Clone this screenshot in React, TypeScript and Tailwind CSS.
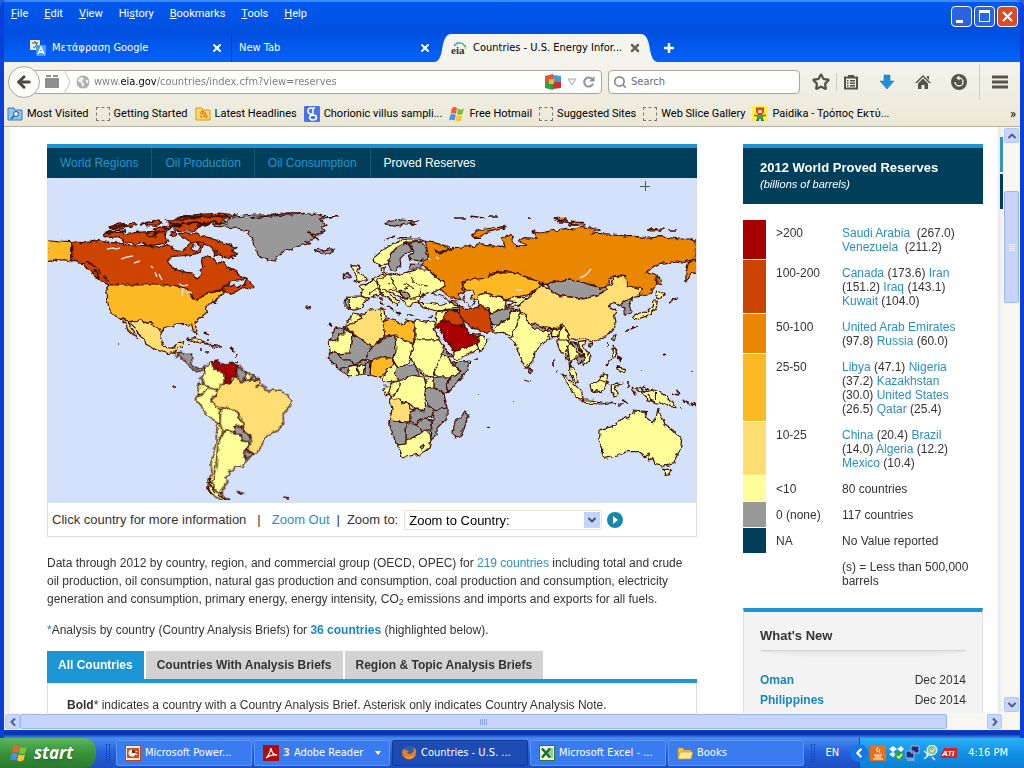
import type { ReactNode } from "react";
import {
  ArrowLeft,
  ChevronDown,
  ChevronLeft,
  ChevronRight,
  ChevronUp,
  Search,
  Star,
  X,
} from "lucide-react";

const RED = "#a80000";
const RUST = "#cd4400";
const ORANGE = "#ea8600";
const AMBER = "#fdb924";
const SAND = "#ffdf73";
const LEMON = "#ffff99";
const GRAY = "#999999";

type Shape = [fill: string, points: string];

// Each sheet of the map has its own origin and scale
const SHEETS: { transform: string; width: number; shapes: Shape[] }[] = [
  {
    // North America, Greenland
    transform: "translate(40 135) scale(0.3333)",
    width: 3.6,
    shapes: [
      [AMBER, "20,314 60,318 95,320 95,378 70,374 50,378 40,374 20,382"],
      [
        RUST,
        "95,320 125,323 140,318 160,320 175,314 215,322 245,325 270,333 320,331 350,338 375,332 385,328 400,345 425,350 440,335 455,320 462,330 455,345 470,350 480,335 470,322 490,325 484,352 460,358 430,362 395,364 385,378 398,400 430,410 458,415 466,428 476,432 482,412 492,396 486,372 500,362 520,370 532,385 545,380 565,400 590,410 605,425 622,430 600,437 570,440 552,458 580,448 590,455 612,448 622,432 642,452 640,462 615,456 590,472 570,478 548,462 500,475 490,487 460,492 455,480 430,462 385,450 210,450 195,445 182,432 165,425 155,405 140,400 130,386 120,385 108,376 95,378",
      ],
      [
        AMBER,
        "210,450 385,450 410,452 440,460 455,480 460,492 490,487 500,475 530,470 548,461 555,472 540,482 532,492 515,500 508,510 497,512 502,530 480,550 465,562 474,585 470,598 460,588 455,568 440,572 430,565 405,567 398,574 385,573 368,582 364,592 350,575 340,572 330,560 312,562 300,555 270,560 245,552 220,540 208,522 200,490 198,465",
      ],
      [
        SAND,
        "245,552 270,560 300,555 312,564 330,560 342,574 352,576 364,592 362,610 372,636 392,640 405,635 412,620 432,618 425,638 410,642 404,652 385,656 350,645 318,628 312,612 295,596 285,578 268,562 270,575 288,600 290,608 272,592 262,582 258,566 245,555",
      ],
      [
        RUST,
        "190,300 200,290 245,292 262,298 290,292 330,290 350,305 345,292 378,290 375,310 390,318 375,325 330,332 300,322 290,328 250,322 240,305 200,308",
      ],
      [RUST, "415,296 445,294 470,298 510,308 530,318 560,326 588,338 575,346 592,358 570,364 578,372 556,368 540,360 525,362 530,348 505,332 480,322 450,320 430,310"],
      [RUST, "375,255 395,258 420,243 480,238 540,234 592,240 550,252 556,260 520,262 500,272 470,278 462,288 430,288 400,285 405,275 380,270 395,264"],
      [RUST, "206,276 240,266 262,274 240,284 210,284"],
      [RUST, "262,270 285,262 292,268 275,276"],
      [RUST, "315,264 345,256 366,262 350,274 320,272"],
      [RUST, "340,282 370,274 395,278 380,288 350,290"],
      [RUST, "320,296 345,290 340,306 325,304"],
      [RUST, "392,296 405,290 410,300 398,306"],
      [
        GRAY,
        "518,268 560,264 562,256 585,246 640,240 700,240 720,235 780,232 810,238 830,238 850,244 895,245 866,250 838,252 858,268 842,276 858,286 842,296 810,300 836,308 795,320 812,326 790,330 760,340 730,350 718,358 705,378 685,375 662,370 654,356 650,345 636,325 638,310 622,290 600,284 590,280 560,276 530,274",
      ],
      [GRAY, "822,345 832,340 845,346 868,340 884,345 872,354 848,356 830,350"],
      [SAND, "442,612 460,608 485,616 506,628 480,624 460,618"],
      [GRAY, "510,628 535,630 545,636 520,638"],
    ],
  },
  {
    // Central and South America
    transform: "translate(130 340) scale(0.3333)",
    width: 3.6,
    shapes: [
      [GRAY, "138,40 152,36 185,42 185,66 192,82 215,86 232,80 230,92 212,94 190,90 168,66 150,52"],
      [LEMON, "132,34 150,38 138,50"],
      [LEMON, "225,78 248,64 252,88 284,100 286,125 270,145 252,150 236,142 220,130 208,116 224,102"],
      [RED, "250,65 262,60 268,72 310,70 326,76 318,98 320,106 300,114 300,128 286,132 284,102 258,88"],
      [GRAY, "324,80 346,96 342,124 328,124 318,105"],
      [LEMON, "346,100 366,103 362,122 344,122"],
      [GRAY, "366,103 380,112 376,122 362,122"],
      [LEMON, "204,130 220,130 238,144 216,164 202,162 206,146"],
      [LEMON, "200,166 216,164 238,144 268,150 262,162 245,168 243,182 256,198 272,200 270,246 262,250 226,222 212,195 196,176"],
      [
        SAND,
        "268,134 286,132 300,128 320,108 330,125 345,125 375,122 385,112 390,128 378,142 400,136 406,148 430,150 455,155 476,166 486,182 480,200 460,220 460,246 440,275 412,284 398,300 396,318 380,338 370,340 348,325 365,305 362,290 355,282 342,270 336,242 320,215 290,200 272,206 255,198 243,180 262,164",
      ],
      [LEMON, "272,204 290,200 320,215 326,232 336,240 340,258 315,262 312,275 288,272 278,276 270,250"],
      [GRAY, "315,262 334,258 344,280 362,286 355,307 335,300 335,288 312,275"],
      [GRAY, "346,328 370,342 360,355 342,352"],
      [LEMON, "278,277 290,272 312,277 335,290 336,302 357,307 346,328 342,350 350,360 340,378 314,380 310,392 296,394 302,404 285,412 292,430 276,446 278,460 250,455 248,420 256,380 264,310"],
      [LEMON, "262,250 270,250 278,277 264,310 258,380 248,420 248,445 268,460 300,478 280,480 252,470 236,448 234,425 246,400 243,370 258,310"],
      [GRAY, "322,458 342,458 332,463"],
      [GRAY, "464,474 478,475 472,479"],
    ],
  },
  {
    // Europe and Asia
    transform: "translate(370 135) scale(0.3333)",
    width: 3.6,
    shapes: [
      [
        ORANGE,
        "165,318 200,325 235,335 232,345 205,352 195,342 200,355 225,350 248,338 300,335 330,325 360,332 405,335 396,310 420,298 430,302 425,320 440,335 470,330 445,318 462,308 500,310 486,290 510,294 540,288 590,280 615,282 640,275 690,285 660,294 740,298 770,305 800,304 830,310 870,305 930,312 960,312 978,320 978,370 940,382 920,378 900,382 870,385 850,395 830,410 858,420 860,450 835,480 805,485 815,462 775,455 765,430 740,422 720,430 715,455 690,460 650,445 600,432 530,445 515,445 480,430 430,412 400,410 360,415 355,430 318,432 280,440 274,452 285,470 265,476 275,495 240,488 215,465 225,440 200,430 188,415 175,405 155,385 165,375 175,360",
      ],
      [ORANGE, "980,370 955,385 948,410 948,438 965,420 980,410"],
      [ORANGE, "862,420 872,432 876,450 864,446"],
      [ORANGE, "305,300 320,288 345,282 408,274 400,280 350,292 330,310 310,310"],
      [ORANGE, "545,250 585,250 590,256 565,260"],
      [ORANGE, "590,262 640,262 648,270 615,270"],
      [ORANGE, "835,282 880,282 870,288 840,288"],
      [
        AMBER,
        "280,440 318,432 355,430 360,418 400,410 430,412 480,430 518,447 490,468 480,478 450,485 410,495 395,488 375,485 350,474 330,478 326,495 310,490 298,472 275,460",
      ],
      [GRAY, "530,445 560,440 600,432 650,445 690,460 716,455 712,466 690,475 670,486 640,490 570,482 540,465"],
      [
        SAND,
        "515,448 540,465 570,482 640,492 670,486 712,466 706,452 724,448 728,430 745,422 765,425 775,452 815,462 805,485 790,488 765,500 745,512 735,502 716,512 728,524 740,522 732,538 738,560 730,580 710,605 680,615 665,622 640,612 620,615 600,610 590,585 560,580 520,575 475,565 450,540 440,512 475,490 490,472",
      ],
      [GRAY, "750,510 765,498 788,490 778,512 786,530 766,540 764,520"],
      [LEMON, "790,545 812,534 832,530 850,515 852,495 862,496 858,522 834,542 795,555"],
      [LEMON, "860,468 885,478 872,490 858,485"],
      [LEMON, "732,600 738,598 734,614 728,612"],
      [
        LEMON,
        "412,606 430,592 440,570 445,540 465,535 475,562 490,575 530,590 560,582 575,572 562,605 545,605 545,592 535,600 540,612 526,620 492,652 488,682 468,700 452,672 440,640 434,618",
      ],
      [GRAY, "476,566 500,568 528,582 526,588 490,580"],
      [GRAY, "535,580 552,580 550,588 535,588"],
      [LEMON, "565,590 580,570 592,590 600,612 590,625 596,650 578,650 562,625"],
      [
        RUST,
        "262,508 280,520 308,520 330,514 358,528 360,562 370,590 345,592 325,580 300,576 284,560 268,540",
      ],
      [RUST, "216,550 232,528 260,526 272,545 280,568 260,572 236,560"],
      [RED, "200,572 214,556 236,560 262,575 282,570 300,598 326,606 320,625 280,640 250,650 240,630 222,610 214,590"],
      [LEMON, "248,652 280,640 320,628 328,640 300,655 262,676 250,668"],
      [LEMON, "330,600 354,614 345,635 330,652 322,628 328,608"],
      [ORANGE, "302,600 328,596 326,608"],
      [LEMON, "148,502 180,492 210,494 240,502 260,505 262,520 230,524 200,528 178,522 155,518"],
      [LEMON, "200,530 234,526 214,556 198,574 196,548"],
      [GRAY, "240,496 262,498 268,512 255,512"],
      [GRAY, "360,535 380,528 400,518 432,520 418,532 415,552 385,568 362,565"],
      [LEMON, "365,595 372,586 385,568 415,552 420,532 436,526 455,535 445,548 440,572 425,604 400,592"],
      [LEMON, "326,480 350,474 375,485 395,488 408,500 405,518 368,534 355,520 330,510 322,495"],
      [LEMON, "405,496 430,488 475,488 440,510 405,516 440,500"],
      [LEMON, "12,368 40,345 70,325 110,312 150,312 162,318 110,322 78,340 62,360 55,382 30,392 14,380"],
      [GRAY, "55,384 62,360 78,340 112,322 125,345 100,358 90,372 92,390 75,408 62,402"],
      [GRAY, "118,326 155,318 166,345 172,370 150,378 122,374 115,362 132,350"],
      [GRAY, "118,384 152,386 155,402 120,402"],
      [LEMON, "34,400 46,398 44,415 34,412"],
      [
        LEMON,
        "0,440 18,426 60,416 80,420 110,412 140,405 175,405 188,418 200,430 226,440 215,462 195,468 180,480 165,478 150,482 155,500 128,504 118,518 105,505 96,492 72,476 60,470 62,482 88,500 80,512 58,492 36,476 0,482",
      ],
      [LEMON, "-32,450 -10,448 10,432 30,450 26,462 32,478 10,484 -5,490 -28,482 -22,465"],
      [LEMON, "-72,484 -28,483 -5,490 -20,505 -28,520 -50,526 -62,522 -62,492 -74,492"],
      [GRAY, "-74,492 -62,492 -62,520 -75,518"],
      [LEMON, "-54,392 -32,394 -40,408 -26,420 -10,430 -15,438 -50,440 -36,430 -48,412"],
      [GRAY, "-80,420 -66,412 -60,428 -80,432"],
      [GRAY, "45,262 70,258 90,255 150,258 120,262 135,268 100,266 90,275 60,272"],
      [GRAY, "90,466 112,470 120,485 108,492 92,480"],
    ],
  },
  {
    // Southeast Asia and Oceania
    transform: "translate(400 340) scale(0.3333)",
    width: 3.6,
    shapes: [
      [GRAY, "387,78 398,90 394,102 386,98"],
      [LEMON, "470,0 500,0 512,12 500,25 502,42 510,60 504,66 496,40 480,38"],
      [LEMON, "500,22 512,10 540,40 528,55 516,58 514,75 506,60"],
      [GRAY, "512,5 530,8 534,22 554,42 542,46 522,22"],
      [GRAY, "528,52 554,45 552,64 536,70"],
      [LEMON, "535,8 555,4 550,20 570,48 568,64 550,76 548,66 558,50 538,22"],
      [LEMON, "508,70 524,95 532,128 520,120 510,100"],
      [LEMON, "483,102 500,110 520,130 545,155 550,178 532,172 508,138"],
      [LEMON, "545,180 572,180 596,184 622,190 600,192 556,188"],
      [LEMON, "570,132 590,126 602,112 615,98 626,108 620,135 606,158 576,154"],
      [LEMON, "634,135 655,128 666,132 644,142 656,164 644,168 634,156"],
      [LEMON, "636,26 650,28 646,48 638,48"],
      [LEMON, "652,80 674,86 670,98 656,92"],
      [LEMON, "704,145 722,142 735,156 762,150 790,160 804,174 828,200 812,200 792,188 770,192 742,182 730,164"],
      [LEMON, "566,12 578,10 574,22"],
      [
        LEMON,
        "597,275 640,258 662,240 672,228 684,234 698,222 702,210 740,215 736,232 760,248 768,236 774,205 782,226 790,240 796,256 815,270 828,284 845,296 842,325 826,356 822,372 790,378 768,374 758,356 745,360 748,342 735,350 715,335 680,335 652,348 612,355 606,345 608,325 596,296",
      ],
      [LEMON, "790,388 812,388 808,404 798,406"],
    ],
  },
  {
    // Africa
    transform: "translate(0 0)",
    width: 1.2,
    shapes: [
      [LEMON, "342,328 348,322 352,314 360,315 361,319 345,327"],
      [GRAY, "329,340 335,328 345,328 345,334 338,334 338,341"],
      [LEMON, "329,340 338,341 338,334 345,334 345,329 352,334 350,353 338,354 330,351"],
      [SAND, "345,327 361,319 360,315 370,310 380,309 383,310 381,316 384,322 385,336 372,347 352,333"],
      [LEMON, "380,309 384,310 385,317 387,318 383,323 381,316"],
      [AMBER, "383,322 390,319 400,323 403,325 407,320 415,322 415,344 395,335 386,336"],
      [LEMON, "415,320 425,322 433,321 436,327 433,329 440,340 415,340"],
      [GRAY, "352,334 372,347 371,356 362,360 356,365 350,360 342,360 338,354 350,353"],
      [GRAY, "372,347 386,337 395,336 396,350 392,358 380,358 371,361 366,357"],
      [LEMON, "395,335 414,345 413,355 408,364 398,368 393,360 396,350"],
      [LEMON, "415,340 440,340 446,349 441,356 437,368 433,377 425,376 414,365 410,356 414,345"],
      [GRAY, "444,345 448,352 453,357 446,356 441,354"],
      [LEMON, "441,355 449,357 451,364 461,371 451,377 438,377 434,372 437,366"],
      [GRAY, "452,363 470,361 468,370 449,392 447,385 451,377 461,371"],
      [GRAY, "434,378 438,377 450,377 447,385 449,392 445,394 434,388"],
      [LEMON, "426,379 434,378 434,387 426,388"],
      [GRAY, "425,388 434,388 444,394 446,403 447,408 437,410 430,407 425,400"],
      [LEMON, "400,379 410,375 424,377 426,385 425,393 424,402 425,411 415,409 408,402 392,399 390,396 397,392 400,384"],
      [LEMON, "386,392 392,383 400,380 400,385 396,393 391,397"],
      [LEMON, "383,386 392,386 390,393 386,395"],
      [LEMON, "383,379 387,370 394,362 398,370 397,381 384,382"],
      [GRAY, "395,374 398,368 408,364 414,366 420,375 410,376 404,379 397,379"],
      [AMBER, "370,375 371,361 380,358 392,358 394,363 386,372 379,377"],
      [GRAY, "330,352 338,354 342,360 350,360 356,365 348,366 346,373 340,370 333,363 328,358"],
      [GRAY, "356,365 362,360 370,361 366,365 357,367"],
      [LEMON, "348,367 357,365 358,375 348,376"],
      [LEMON, "358,366 364,365 365,374 358,375"],
      [GRAY, "365,364 371,361 370,375 365,374"],
      [GRAY, "340,370 348,367 348,376"],
      [SAND, "390,399 400,399 402,403 408,402 410,409 416,410 410,412 410,422 389,422 392,410"],
      [GRAY, "410,412 417,409 424,411 425,405 433,408 434,415 423,420 416,424 410,421"],
      [GRAY, "434,410 447,408 447,418 437,428 437,435 431,440 432,425 434,415"],
      [GRAY, "416,424 424,418 432,420 431,430 422,432"],
      [GRAY, "406,424 416,424 422,432 414,438 406,442"],
      [GRAY, "389,421 410,422 406,424 406,444 398,445 393,436"],
      [LEMON, "398,445 406,444 406,440 414,438 422,432 430,432 431,441 429,448 420,454 405,457 402,456"],
      [GRAY, "420,447 423,445 424,448 421,449"],
      [GRAY, "465,411 468,417 464,428 460,437 455,438 453,433 455,421 462,417"],
    ],
  },
];

const BORDERS =
  "M369 294 377 288 378 280M377 288 386 291 394 289M392 276 393 283 398 291M394 289 400 292 410 285M410 285 414 290M400 292 404 299 416 299M412 277 414 283 428 286M410 299 419 296 420 288M378 280 386 276M655.500 392V403M410 285 404 284M388 284 393 283M524 380 530 382M610 384 600 380";

const SPECKS =
  "M118 343h1M188 345h2M200 350h3M206 352h4M230 348l4 3M236 354v3M237 361v2M204 332l5 4M207 341h3M347 272h2M345 300h2M328 324l4 3M336 328h2M305 307l6 1M174 387h3M456 364h2M475 359h3M478 395h1M486 428l5-1M513 401h1M554 360v6M557 371h1M572 377h1M583 400h1M608 342v6M612 345l4 8M616 352l5 10M618 356l4 3M606 366l5-8M632 388l4 6M628 382v6M640 392h6M622 400l6 3M618 404h6M606 402l10 2M643 386l6 4M648 394l5 8M672 394l8 1M676 390l5 4M683 400l8 5M692 403l4 3M664 355l2-1M642 370h1M690 372h2M681 409h1M634 392l2 3M454 218h12M470 216l14 2M488 217h10M528 218h3M560 222h12M568 225h10M647 229h10M668 230h8M380 303l5 2M388 306l6 4M396 312l4 3M408 315h5M429 317l4-1M382 297v4M626 332l3-3M630 329l8-4M668 302l9-4M98 269l4 5M90 263l6 5M86 260l4 4M94 270l6 9M104 276l5 6M312 236l8 4M306 232l10 2M250 218l20-2M270 216l30-2M176 220l28-3M170 226l24-4M212 300l4 3M385 240l10-4M397 238l14-1M209 483l6 10M207 486l5 9M218 495l10 4M210 478l1 5";

const LAKES =
  "M107 249l6-1 3 1 4-1M121 259l6-2 6-1M134 263l6-2M151 266l2 2M155 272l2 5M159 274l3 6M179 284l4 2 5-1M183 288l-1 8M186 291l6 2M428 258l3 2M436 257l3 2M580 278l6-3 5-6M516 290h6";

function WorldMap() {
  return (
    <svg
      viewBox="48 178 648 325"
      className="block h-auto w-full bg-[#d4e1fb]"
      role="img"
      aria-label="Proved Reserves"
    >
      <defs>
        <filter id="coast" x="0" y="0" width="100%" height="100%" colorInterpolationFilters="sRGB">
          <feTurbulence type="fractalNoise" baseFrequency="0.18" numOctaves="2" seed="4" />
          <feDisplacementMap in="SourceGraphic" scale="5" xChannelSelector="R" yChannelSelector="G" />
        </filter>
      </defs>
      <g filter="url(#coast)" stroke="#401008" strokeLinejoin="round">
        {SHEETS.map((sheet) => (
          <g key={sheet.transform} transform={sheet.transform} strokeWidth={sheet.width}>
            {sheet.shapes.map(([fill, points]) => (
              <polygon key={points} points={points} fill={fill} />
            ))}
          </g>
        ))}
        {/* Caspian and Black seas */}
        <path
          d="M466 290l5-1 3 4-3 5 3 5-3 4-5-4-3-6z M420 298l8-5 8 1 10 4 4 5-8 2-14-2-8 1z"
          fill="#d4e1fb"
          strokeWidth="1"
        />
        <path d={BORDERS} fill="none" strokeWidth="1" />
        <path d={SPECKS} fill="none" strokeWidth="1.6" />
        <path
          d="M178 217l50-1M172 224l50-2M164 229l18-4M196 226l14-3M110 228l18-3M106 233l20-2M140 225l14-3"
          fill="none"
          strokeWidth="2"
        />
      </g>
      <path d={LAKES} fill="none" stroke="#d5d9e4" strokeWidth="1.500" />
      <path d="M640 186.500h10M645.500 181v10" stroke="#555" strokeWidth="1" />
    </svg>
  );
}

const MENUS = ["File", "Edit", "View", "History", "Bookmarks", "Tools", "Help"];
const MENU_KEYS: Record<string, number> = { History: 2 };

const LEGEND: { color: string; range: string; lines: string[] }[] = [
  { color: "bg-[#a80000]", range: ">200", lines: ["[Saudi Arabia]\u00a0 (267.0)", "[Venezuela]\u00a0 (211.2)"] },
  { color: "bg-[#cd4400]", range: "100-200", lines: ["[Canada] (173.6) [Iran]", "(151.2) [Iraq] (143.1)", "[Kuwait] (104.0)"] },
  { color: "bg-[#ea8600]", range: "50-100", lines: ["[United Arab Emirates]", "(97.8) [Russia] (60.0)"] },
  { color: "bg-[#fdb924]", range: "25-50", lines: ["[Libya] (47.1) [Nigeria]", "(37.2) [Kazakhstan]", "(30.0) [United States]", "(26.5) [Qatar] (25.4)"] },
  { color: "bg-[#ffdf73]", range: "10-25", lines: ["[China] (20.4) [Brazil]", "(14.0) [Algeria] (12.2)", "[Mexico] (10.4)"] },
  { color: "bg-[#ffff99]", range: "<10", lines: ["80 countries"] },
  { color: "bg-[#999999]", range: "0 (none)", lines: ["117 countries"] },
  { color: "bg-[#003f5c]", range: "NA", lines: ["No Value reported"] },
  { color: "", range: "", lines: ["(s) = Less than 500,000", "barrels"] },
];

function LegendLine({ text }: { text: string }) {
  return (
    <div className="whitespace-nowrap">
      {text.split(/(\[[^\]]+\])/).map((part, i) =>
        part.startsWith("[") ? (
          <a key={i} href="#country" className="text-[#2a8fbd]">
            {part.slice(1, -1)}
          </a>
        ) : (
          part
        )
      )}
    </div>
  );
}

function WindowsFlag({ className }: { className: string }) {
  return (
    <svg viewBox="0 0 16 16" className={className}>
      <path d="M3 2q3-2 5 0L7 8Q4 6 1.500 8z" fill="#f0602c" />
      <path d="M9 2.500q3 2 6 0L13.500 8q-3 2-5.500 0z" fill="#7cc03f" />
      <path d="M1.300 9Q4 7 6.800 9L5.500 14.500Q3 13 0 14.500z" fill="#4d8ff0" />
      <path d="M7.800 9q3 2 5.600 0L12 14.500q-3 2-5.600 0z" fill="#fbc72f" />
    </svg>
  );
}

function Placeholder() {
  return <span className="size-3.5 border border-dashed border-[#777]" />;
}

const BOOKMARKS: { label: string; icon: ReactNode }[] = [
  {
    label: "Most Visited",
    icon: (
      <svg viewBox="0 0 16 16" className="size-4">
        <path d="M1 2h6l1 2h7v10H1z" fill="#8cc4ee" stroke="#3f7fb8" />
        <circle cx="9" cy="8" r="2.500" fill="#dff0fc" stroke="#23588c" />
        <path d="M7 10l-3 3" stroke="#23588c" strokeWidth="1.500" />
      </svg>
    ),
  },
  { label: "Getting Started", icon: <Placeholder /> },
  {
    label: "Latest Headlines",
    icon: (
      <svg viewBox="0 0 16 16" className="size-4">
        <path d="M1 2h6l1 2h7v10H1z" fill="#fbd66b" stroke="#d19a26" />
        <path d="M5 7a5 5 0 0 1 5 5M5 10a2 2 0 0 1 2 2M6 5a7 7 0 0 1 6 7" fill="none" stroke="#e07c10" strokeWidth="1.300" />
      </svg>
    ),
  },
  {
    label: "Chorionic villus sampli...",
    icon: (
      <svg viewBox="0 0 16 16" className="size-4">
        <rect width="16" height="16" rx="1" fill="#4775e8" />
        <path d="M11 2H7a3 3 0 0 0 0 6h2v2M9 9a3 2.200 0 1 0 0 5 3 2.200 0 0 0 0-5M9 3v4" fill="none" stroke="#fff" strokeWidth="1.600" />
      </svg>
    ),
  },
  { label: "Free Hotmail", icon: <WindowsFlag className="size-4" /> },
  { label: "Suggested Sites", icon: <Placeholder /> },
  { label: "Web Slice Gallery", icon: <Placeholder /> },
  {
    label: "Paidika - Τρόπος Εκτύ...",
    icon: (
      <svg viewBox="0 0 16 16" className="size-4">
        <rect width="16" height="16" fill="#fff04a" />
        <path d="M4 1l2 1 2-1 2 1 2-1v5l-2 3H6L4 6z" fill="#d8441c" />
        <path d="M6 4h4v3H6z" fill="#ffd9b8" />
        <path d="M5 9h6v4H5z" fill="#2fa84a" />
        <path d="M5 13h2v2H4zM9 13h2l1 2H9z" fill="#2a55c8" />
        <path d="M2 9l3 1M14 9l-3 1" stroke="#d8441c" strokeWidth="1.500" />
      </svg>
    ),
  },
];

const TASKS: { label: string; active?: boolean; count?: string; icon: ReactNode }[] = [
  {
    label: "Microsoft Power...",
    icon: (
      <svg viewBox="0 0 16 16" className="size-4 shrink-0">
        <rect x="0.500" y="0.500" width="15" height="15" fill="#fbe9dc" stroke="#c4451c" />
        <rect x="2" y="3" width="12" height="10" fill="#c9501f" />
        <circle cx="7" cy="8" r="3.500" fill="#fff" />
        <path d="M7 8V4.500A3.500 3.500 0 0 1 10.500 8z" fill="#6b2a10" />
        <path d="M11.500 6v1M11.500 9v1" stroke="#fff" strokeWidth="1.500" />
      </svg>
    ),
  },
  {
    label: "Adobe Reader",
    count: "3",
    icon: (
      <svg viewBox="0 0 16 16" className="size-4 shrink-0">
        <rect width="16" height="16" fill="#b30b0b" />
        <path d="M3 13q4-4 5-10 1 7 6 7-6-1-11 3z" fill="none" stroke="#fff" strokeWidth="1.300" />
      </svg>
    ),
  },
  {
    label: "Countries - U.S. ...",
    active: true,
    icon: (
      <svg viewBox="0 0 16 16" className="size-4 shrink-0">
        <circle cx="8" cy="8" r="7" fill="#2b5fb4" />
        <path d="M2 4q-2 5 1 8 4 4 9 1 4-3 3-8-1-2-3-3 2 4-1 6-3 2-5 0l2-2-3-1q-2 0-3-1z" fill="#ee7a1a" />
        <path d="M4 11q4 4 9 0" fill="none" stroke="#fbc531" />
      </svg>
    ),
  },
  {
    label: "Microsoft Excel - ...",
    icon: (
      <svg viewBox="0 0 16 16" className="size-4 shrink-0">
        <rect x="0.500" y="0.500" width="15" height="15" fill="#e9f5e6" stroke="#2f7a35" />
        <rect x="9" y="3" width="5" height="10" fill="#9ccb98" />
        <path d="M3 3.500l8 9M11 3.500l-8 9" stroke="#1d6b2a" strokeWidth="2.500" />
      </svg>
    ),
  },
  {
    label: "Books",
    icon: (
      <svg viewBox="0 0 16 16" className="size-4 shrink-0">
        <path d="M1 3h5l1 2h7v9H1z" fill="#f4c64a" stroke="#b98a1c" strokeWidth="0.700" />
        <path d="M1 14l2-7h13l-2 7z" fill="#ffe88f" stroke="#b98a1c" strokeWidth="0.700" />
      </svg>
    ),
  },
];

function BrowserTabs() {
  return (
    <div className="flex h-7 items-stretch text-[11px] text-white">
      <div className="flex w-[228px] items-center border-r border-[#0038b0] pr-2 pl-[26px]">
        <svg viewBox="0 0 16 16" className="mr-1.5 size-4">
          <rect width="10" height="10" fill="#e8e8e8" />
          <path d="M2 3h6M5 1v2M3 8q4-1 4-5" stroke="#555" fill="none" />
          <rect x="6" y="5" width="10" height="11" rx="1" fill="#4a9ff5" />
          <path d="M8 14l3-7 3 7M9 12h4" stroke="#fff" strokeWidth="1.300" fill="none" />
        </svg>
        <span className="flex-1">Μετάφραση Google</span>
        <button aria-label="Close tab">
          <X className="size-3" strokeWidth={4} />
        </button>
      </div>
      <div className="flex w-[203px] items-center pr-1 pl-[7px]">
        <span className="flex-1">New Tab</span>
        <button aria-label="Close tab">
          <X className="size-3" strokeWidth={4} />
        </button>
      </div>
      <svg viewBox="0 0 16 28" className="h-7 w-4">
        <path d="M0 28Q5 27 7 16 9 0 16 0V28z" fill="#f4f3ec" />
      </svg>
      <div className="flex w-[190px] items-center gap-1.5 bg-[#f4f3ec] text-black">
        <svg viewBox="0 0 16 16" className="size-4">
          <path d="M3 6Q8-1 15 7" fill="none" stroke="#3d9bd8" strokeWidth="1.500" />
          <path d="M7 3q5-1 8 6" fill="none" stroke="#8bc34a" />
          <text x="0" y="14" fontSize="11" fontWeight="700" fill="#333" fontFamily="Liberation Serif, serif">
            eia
          </text>
        </svg>
        <span className="flex-1 whitespace-nowrap">Countries - U.S. Energy Infor...</span>
        <button aria-label="Close tab" className="text-[#6a6757]">
          <X className="size-3" strokeWidth={5} />
        </button>
      </div>
      <svg viewBox="0 0 16 28" className="h-7 w-4">
        <path d="M16 28Q11 27 9 16 7 0 0 0V28z" fill="#f4f3ec" />
      </svg>
      <button aria-label="New tab" className="ml-1.5">
        <svg viewBox="0 0 12 12" className="size-3">
          <path d="M6 1v10M1 6h10" stroke="#fff" strokeWidth="2.500" />
        </svg>
      </button>
    </div>
  );
}

function NavToolbar() {
  return (
    <div className="flex h-10 items-center pr-3 pl-1 text-[11px]">
      <button
        aria-label="Back"
        className="z-10 flex size-8 items-center justify-center rounded-full border border-[#aaa89c] bg-[#fbfbf7]"
      >
        <ArrowLeft className="size-[18px] text-[#4c4a40]" strokeWidth={4} />
      </button>
      <div className="-ml-2 flex h-6 flex-1 items-center rounded-r-sm border border-[#a9a79b] bg-white pr-1.5 pl-[11px]">
        <svg viewBox="0 0 28 24" className="h-6 w-7 shrink-0">
          <path d="M1 8h14v10H1zM2 5h5v2H2zM9 5h5v2H9z" fill="#8f8f8f" />
          <path d="M20 0l6 12-6 12" fill="none" stroke="#c4c4c4" />
        </svg>
        <svg viewBox="0 0 16 16" className="mx-1 size-3.5 shrink-0">
          <circle cx="8" cy="8" r="7.500" fill="#aeaeae" />
          <path d="M3 4q4-3 6 0L7 8l3 2-2 4Q6 12 6 9L2 7zM11 5l3 1v4l-3-2z" fill="#eee" />
        </svg>
        {/* The domain part of the address is darker */}
        <input
          aria-label="Address"
          defaultValue="www.eia.gov/countries/index.cfm?view=reserves"
          className="min-w-0 flex-1 bg-[linear-gradient(90deg,#777_27px,#000_27px,#000_63px,#777_63px)] bg-clip-text text-transparent outline-none"
        />
        <svg viewBox="0 0 16 16" className="size-4">
          <path d="M0 2l8-2v8H0z" fill="#e0572b" />
          <path d="M8 1l8 1v6H8z" fill="#3f9fd0" />
          <path d="M0 8h8v8l-8-2z" fill="#3a9a45" />
          <path d="M8 8h8v6l-8 1z" fill="#d0302a" />
          <path d="M4 5h5v5H4z" fill="#f3b92e" />
        </svg>
        <svg viewBox="0 0 10 8" className="mx-1.5 h-2 w-2.5">
          <path d="M1 1h8L5 7z" fill="#eee" stroke="#aaa" />
        </svg>
        <button aria-label="Reload">
          <svg viewBox="0 0 12 12" className="size-3">
            <path d="M10 7.500A4.500 4.500 0 1 1 9 3" fill="none" stroke="#8c939b" strokeWidth="2" />
            <path d="M11.500 0v5.500H6z" fill="#8c939b" />
          </svg>
        </button>
      </div>
      <div className="ml-1.5 flex h-6 w-48 items-center gap-1 rounded-sm border border-[#a9a79b] bg-white px-1">
        <Search className="size-3.5 shrink-0 text-[#8b8f94]" strokeWidth={3} />
        <input
          aria-label="Search"
          placeholder="Search"
          className="w-full bg-transparent outline-none placeholder:text-[#6d6d6d]"
        />
      </div>
      <div className="flex items-center text-[#55534a]">
        <button aria-label="Bookmark" className="ml-3 border-r border-[#d0cec2] pr-1.5">
          <Star className="size-[18px]" strokeWidth={3} />
        </button>
        <button aria-label="Bookmarks list" className="ml-1.5">
          <svg viewBox="0 0 16 16" className="size-4">
            <path d="M2 3.500h12v11H2z" fill="none" stroke="currentColor" strokeWidth="2" />
            <path d="M5 1h6v3H5zM4 6h1.500v1.500H4zM7 6h5v1.500H7zM4 8.500h1.500V10H4zM7 8.500h5V10H7zM4 11h1.500v1.500H4zM7 11h5v1.500H7z" fill="currentColor" />
          </svg>
        </button>
        <button aria-label="Downloads" className="ml-5">
          <svg viewBox="0 0 16 16" className="size-4">
            <path d="M5 1h6v6h4l-7 8-7-8h4z" fill="#1d8fdc" stroke="#1873b4" strokeWidth="0.500" />
          </svg>
        </button>
        <button aria-label="Home" className="ml-5">
          <svg viewBox="0 0 16 16" className="size-4">
            <path d="M8 1L0 9h2l6-6 6 6h2zM3 9.500L8 4.500l5 5V15H9.500v-4h-3v4H3zM12 2h2v4l-2-2z" fill="currentColor" />
          </svg>
        </button>
        <button aria-label="Refresh add-on" className="ml-5">
          <svg viewBox="0 0 16 16" className="size-4">
            <circle cx="8" cy="8" r="8" fill="currentColor" />
            <path d="M8 4a4 4 0 1 1-4 4" fill="none" stroke="#f0efe6" strokeWidth="1.500" />
            <path d="M8.500 1.500v5L5 4z" fill="#f0efe6" />
          </svg>
        </button>
        <span className="ml-3 h-9 w-px bg-[#cfcdc1]" />
        <button aria-label="Menu" className="ml-3">
          <svg viewBox="0 0 16 14" className="h-3.5 w-4">
            <path d="M0 2h16M0 7h16M0 12h16" stroke="currentColor" strokeWidth="3" />
          </svg>
        </button>
      </div>
    </div>
  );
}

function ScrollButton({ label, children }: { label: string; children: ReactNode }) {
  return (
    <button
      aria-label={label}
      className="flex size-[15px] shrink-0 items-center justify-center rounded-xs border border-[#b3c6f8] bg-[#c8d6fb] text-[#4d6185]"
    >
      {children}
    </button>
  );
}

function MapPanel() {
  return (
    <section>
      <nav className="flex h-[34px] border-t-4 border-[#1b95d3] bg-[#003f5c] text-[12px] leading-[30px] text-[#2a93c4]">
        <a href="#regions" className="border-r border-[#1c5570] px-[13px]">World Regions</a>
        <a href="#production" className="border-r border-[#1c5570] px-[13px]">Oil Production</a>
        <a href="#consumption" className="border-r border-[#1c5570] px-[13px]">Oil Consumption</a>
        <a href="#reserves" className="px-[13px] text-white">Proved Reserves</a>
      </nav>
      <div className="border border-t-0 border-[#dcdcdc]">
        <WorldMap />
        <div className="flex h-[33px] items-center pl-1 text-[13px] whitespace-nowrap">
          <span>Click country for more information</span>
          <span className="mx-[11px]">|</span>
          <a href="#zoom-out" className="text-[#2a8fbd]">Zoom Out</a>
          <span className="mx-[7px]">|</span>
          <label htmlFor="zoom">Zoom to:</label>
          <span className="relative ml-1.5">
            <select
              id="zoom"
              className="block h-5 w-[198px] appearance-none border border-[#efe3d2] bg-white pl-1 text-[13px] text-black"
            >
              <option>Zoom to Country:</option>
            </select>
            <span className="pointer-events-none absolute top-0.5 right-0.5 flex size-4 items-center justify-center bg-[#c3d3fc]">
              <ChevronDown className="size-3 text-[#3d5488]" strokeWidth={4} />
            </span>
          </span>
          <button aria-label="Go" className="ml-1">
            <svg viewBox="0 0 18 18" className="size-[18px]">
              <circle cx="9" cy="9" r="8" fill="#1787ab" />
              <path d="M7 5l5 4-5 4z" fill="#fff" />
            </svg>
          </button>
        </div>
      </div>
    </section>
  );
}

function Sidebar() {
  return (
    <aside className="w-60 shrink-0 text-[12px] leading-[14px]">
      <header className="h-[60px] border-t-4 border-[#1b95d3] bg-[#003f5c] px-[17px] pt-3 text-white">
        <h2 className="text-[13px] leading-4 font-bold">2012 World Proved Reserves</h2>
        <p className="text-[11px] leading-4 italic">(billions of barrels)</p>
      </header>
      <table className="mt-4 w-full border-separate border-spacing-0">
        <tbody>
          {LEGEND.map((row) => (
            <tr key={row.lines[0]} className="align-top">
              <td className={`w-[23px] border-b border-white bg-clip-padding ${row.color}`} />
              <td className="w-[76px] py-1.5 pl-2.5">{row.range}</td>
              <td className="py-1.5">
                {row.lines.map((line) => (
                  <LegendLine key={line} text={line} />
                ))}
              </td>
            </tr>
          ))}
        </tbody>
      </table>
      <section className="mt-3.5 h-40 border border-t-4 border-[#dedede] border-t-[#1b95d3] bg-[#f3f3f3] px-4">
        <h2 className="pt-4 pb-1.5 text-[13px] leading-4 font-bold">What's New</h2>
        <div className="h-2 rounded-[50%/0_0_100%_100%] border-t border-[#d2d2d2] bg-linear-to-b from-[#e6e6e6] to-[#f3f3f3]" />
        <ul className="mt-3 leading-5">
          {["Oman", "Philippines"].map((country) => (
            <li key={country} className="flex justify-between">
              <a href="#new" className="font-bold text-[#1b87c0]">{country}</a>
              <span>Dec 2014</span>
            </li>
          ))}
        </ul>
      </section>
    </aside>
  );
}

function Taskbar() {
  return (
    <footer className="flex h-[30px] shrink-0 items-stretch bg-linear-to-b from-[#4a8bf0] via-[#245edb] to-[#1e4fc0] text-[11px] text-white">
      <button className="flex w-24 items-center gap-1.5 rounded-r-xl bg-linear-to-b from-[#5bb75b] via-[#37923a] to-[#2b7a2e] pl-2.5 font-['Open_Sans',sans-serif] text-[17px] font-bold italic text-shadow-md">
        <WindowsFlag className="size-[18px]" />
        start
      </button>
      <span className="my-1.5 ml-2.5 w-1 border-x border-dotted border-[#12389c]" />
      <div className="ml-1.5 flex flex-1 gap-0.5 py-0.5">
        {TASKS.map((task) => (
          <button
            key={task.label}
            className={`flex max-w-[136px] flex-1 items-center gap-1 rounded-xs border px-2 whitespace-nowrap ${
              task.active ? "border-[#123c94] bg-[#1d4db4]" : "border-[#5a98f8] bg-[#3a7cf0]"
            }`}
          >
            {task.icon}
            {task.count && <span className="font-bold text-[#fbd9a8]">{task.count}</span>}
            <span className="min-w-0 flex-1 text-left">{task.label}</span>
            {task.count && (
              <svg viewBox="0 0 6 4" className="h-1 w-1.5">
                <path d="M0 0h6L3 4z" fill="#fff" />
              </svg>
            )}
          </button>
        ))}
      </div>
      <span className="my-1.5 ml-1 w-1 border-x border-dotted border-[#12389c]" />
      <span className="mr-5 ml-2.5 self-center">EN</span>
      <div className="flex items-center gap-0.5 border-l border-[#0a4bb0] bg-linear-to-b from-[#2bb0f7] via-[#1191e8] to-[#0d7fd2] pr-4">
        <button aria-label="Show hidden icons" className="-ml-2.5 flex size-[18px] items-center justify-center rounded-full bg-[#1677e4]">
          <ChevronLeft className="size-3.5" strokeWidth={4} />
        </button>
        <svg viewBox="0 0 88 16" className="h-4 w-[88px]">
          <rect width="16" height="16" fill="#e76f1c" />
          <path d="M8 2q-3 3 0 5M10 4q-2 2 0 4M4 10h8M5 12h6M3 14h10" stroke="#fff" fill="none" />
          <path d="M19 4l4-3 4 3-4 3zM27 4l4-3 3 3-3 3zM19 9l4-2 4 3-4 2z" fill="#fff" />
          <circle cx="29" cy="11" r="4.500" fill="#2fa33a" />
          <path d="M27 11l2 2 3-4" stroke="#fff" fill="none" strokeWidth="1.300" />
          <path d="M41 1h8v7h-8zM36 6h8v7h-8z" fill="#1c2c78" stroke="#a9b9ea" />
          <path d="M37 15h8" stroke="#d0d0d0" />
          <circle cx="62" cy="5" r="5" fill="#8fc98a" stroke="#fff" />
          <path d="M60 5l2 2 3-4" stroke="#fff" fill="none" />
          <path d="M54 6l4 3M54 14l4-3M65 15l-3-3M56 10h6" stroke="#eee" strokeWidth="1.500" />
          <path d="M74 3h13v10H70z" fill="#d3232a" />
          <text x="72" y="11" fontSize="8" fontWeight="700" fontStyle="italic" fill="#fff" fontFamily="Liberation Sans, sans-serif">
            ATI
          </text>
        </svg>
        <time className="ml-2 whitespace-nowrap">4:16 PM</time>
      </div>
    </footer>
  );
}

export default function App() {
  return (
    <div className="flex h-screen flex-col overflow-hidden bg-[#245edb] font-['DejaVu_Sans_Condensed','Noto_Sans',sans-serif] text-[11px] text-black">
      <div className="flex min-h-0 flex-1 flex-col rounded-t-lg border-x-4 border-t-2 border-[#0a3fd8] border-t-[#3f8bf8] bg-[#0054e3]">
        <header className="h-[60px] shrink-0 bg-linear-to-b from-[#0058ee] via-[#0050e0] to-[#0462fb]">
          <div className="flex h-8 items-start justify-between text-white">
            <div className="flex gap-4 pt-1 pl-[7px] font-['Roboto',sans-serif] leading-4">
              {MENUS.map((menu) => {
                const at = MENU_KEYS[menu] ?? 0;
                return (
                  <button key={menu}>
                    {menu.slice(0, at)}
                    <u>{menu[at]}</u>
                    {menu.slice(at + 1)}
                  </button>
                );
              })}
            </div>
            <div className="mt-1 mr-0.5 flex gap-0.5">
              <button aria-label="Minimize" className="size-[21px] rounded-sm border border-white bg-[#2a62e4]">
                <svg viewBox="0 0 19 19">
                  <path d="M4 13h7v3H4z" fill="#fff" />
                </svg>
              </button>
              <button aria-label="Maximize" className="size-[21px] rounded-sm border border-white bg-[#2a62e4]">
                <svg viewBox="0 0 19 19">
                  <path d="M4.500 5v9.500h10V5" fill="none" stroke="#fff" />
                  <path d="M4 3h11v3H4z" fill="#fff" />
                </svg>
              </button>
              <button aria-label="Close" className="size-[21px] rounded-sm border border-white bg-[#dd4a24]">
                <svg viewBox="0 0 19 19">
                  <path d="M5 5l9 9M14 5l-9 9" stroke="#fff" strokeWidth="2" />
                </svg>
              </button>
            </div>
          </div>
          <BrowserTabs />
        </header>

        <div className="shrink-0 border-b border-[#b5b3a6] bg-linear-to-b from-[#f4f3ec] to-[#ebe8d7]">
          <NavToolbar />
          <div className="flex h-6 items-center gap-[7px] pr-1 pl-[3px] font-['Roboto',sans-serif] whitespace-nowrap">
            {BOOKMARKS.map((bookmark) => (
              <a key={bookmark.label} href="#bookmark" className="flex items-center gap-1">
                {bookmark.icon}
                {bookmark.label}
              </a>
            ))}
            <button aria-label="More bookmarks" className="ml-auto text-[13px]">»</button>
          </div>
        </div>

        {/* Page and vertical scroll bar */}
        <div className="flex min-h-0 flex-1 bg-[#f0f0ee]">
          <main className="ml-1.5 flex min-w-0 flex-1 items-start gap-[46px] overflow-hidden bg-white pt-[17px] pr-[15px] pl-[37px] font-['Liberation_Sans',sans-serif] text-[#333]">
            <div className="min-w-0 flex-1">
              <MapPanel />
              <div className="mt-[17px] text-[12px] leading-[18px]">
                <p>
                  Data through 2012 by country, region, and commercial group (OECD, OPEC) for{" "}
                  <a href="#all" className="text-[#2a8fbd]">219 countries</a> including total and crude oil
                  production, oil consumption, natural gas production and consumption, coal production and
                  consumption, electricity generation and consumption, primary energy, energy intensity, CO
                  <sub>2</sub> emissions and imports and exports for all fuels.
                </p>
                <p className="mt-[13px]">
                  <span className="text-[#1b87c0]">*</span>Analysis by country (Country Analysis Briefs) for{" "}
                  <a href="#briefs" className="font-bold text-[#1b87c0]">36 countries</a> (highlighted below).
                </p>
              </div>
              <div className="mt-3 flex gap-0.5 border-b-4 border-[#1b95d3] text-[12px] leading-7 font-bold">
                <button className="bg-[#1b95d3] px-[11px] text-white">All Countries</button>
                <button className="bg-[#d2d2d2] px-[11px]">Countries With Analysis Briefs</button>
                <button className="bg-[#d2d2d2] px-[11px]">Region &amp; Topic Analysis Briefs</button>
              </div>
              <div className="h-40 border-x border-[#dcdcdc] px-[19px] pt-[13px] text-[12px] leading-[18px]">
                <b>Bold</b>* indicates a country with a Country Analysis Brief. Asterisk only indicates Country
                Analysis Note.
              </div>
            </div>
            <Sidebar />
          </main>
          <div className="w-[5px] bg-linear-to-r from-[#e4e8eb] to-[#f7f7f5] pt-2.5">
            <div className="ml-0.5 h-[35px] bg-[#3295bd]" />
            <div className="mt-0.5 ml-0.5 h-[35px] bg-[#023a63]" />
          </div>
          <div className="flex w-[17px] flex-col items-center bg-[#f7f6f1] py-px">
            <ScrollButton label="Scroll up">
              <ChevronUp className="size-3" strokeWidth={4} />
            </ScrollButton>
            <div className="mt-12 flex h-28 w-[15px] flex-col items-center justify-center gap-px rounded-xs border border-[#9fb5ee] bg-[#c5d4fc]">
              {[0, 1, 2, 3].map((n) => (
                <span key={n} className="h-px w-1.5 bg-[#eef3ff]" />
              ))}
            </div>
            <div className="mt-auto">
              <ScrollButton label="Scroll down">
                <ChevronDown className="size-3" strokeWidth={4} />
              </ScrollButton>
            </div>
          </div>
        </div>

        {/* Horizontal scroll bar */}
        <div className="flex h-[17px] shrink-0 items-center bg-[#f7f6f1] pr-[18px] pl-px">
          <ScrollButton label="Scroll left">
            <ChevronLeft className="size-3" strokeWidth={4} />
          </ScrollButton>
          <div className="flex h-[15px] w-[93%] items-center justify-center gap-px rounded-xs border border-[#9fb5ee] bg-[#c5d4fc]">
            {[0, 1, 2, 3].map((n) => (
              <span key={n} className="h-1.5 w-px bg-[#8aa3e4]" />
            ))}
          </div>
          <div className="ml-auto">
            <ScrollButton label="Scroll right">
              <ChevronRight className="size-3" strokeWidth={4} />
            </ScrollButton>
          </div>
        </div>
        <div className="h-2 shrink-0 bg-linear-to-b from-[#0b3cd0] via-[#0a2fa8] to-[#4a8bf0]" />
      </div>
      <Taskbar />
    </div>
  );
}
